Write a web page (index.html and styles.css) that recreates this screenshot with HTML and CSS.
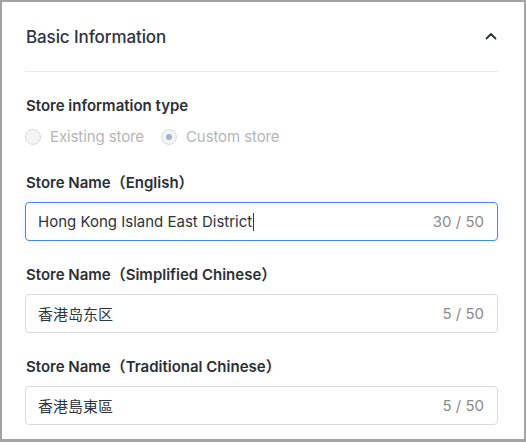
FILE: index.html
```html
<!DOCTYPE html>
<html lang="en">
<head>
<meta charset="utf-8">
<link rel="stylesheet" href="styles.css">
</head>
<body>
<div class="frame">
  <section class="card">
    <header class="card-head">
      <h2 class="title">Basic Information</h2>
      <svg class="chev" width="12" height="8" viewBox="0 0 12 8"><path d="M1.5 6.5 L6 2 L10.5 6.5" fill="none" stroke="#2d3343" stroke-width="1.8" stroke-linecap="round" stroke-linejoin="round"/></svg>
    </header>
    <div class="divider"></div>
    <div class="field first">
      <div class="label">Store information type</div>
      <div class="radios">
        <span class="radio"><span class="circle"></span><span class="rtext">Existing store</span></span>
        <span class="radio"><span class="circle checked"></span><span class="rtext">Custom store</span></span>
      </div>
    </div>
    <div class="field">
      <div class="label">Store Name（English）</div>
      <div class="input focused"><span class="value">Hong Kong Island East District<span class="caret"></span></span><span class="count">30 / 50</span></div>
    </div>
    <div class="field">
      <div class="label">Store Name（Simplified Chinese）</div>
      <div class="input"><span class="value cjk">香港岛东区</span><span class="count">5 / 50</span></div>
    </div>
    <div class="field">
      <div class="label">Store Name（Traditional Chinese）</div>
      <div class="input"><span class="value cjk-tc">香港島東區</span><span class="count">5 / 50</span></div>
    </div>
  </section>
</div>
</body>
</html>
```
FILE: styles.css
```css
html, body { margin: 0; padding: 0; }
body {
  width: 526px;
  height: 442px;
  overflow: hidden;
  background: #a3a3a3;
  font-family: Inter, "Noto Sans CJK SC", sans-serif;
}
.frame {
  box-sizing: border-box;
  width: 526px;
  height: 442px;
  border-style: solid;
  border-color: #a3a3a3;
  border-width: 2px 2px 3px 2px;
  background: #fff;
  overflow: hidden;
}
.card {
  padding: 0 26px 0 23px;
}
.card-head {
  display: flex;
  align-items: center;
  justify-content: space-between;
  padding-top: 23px;
  height: 24px;
  padding-bottom: 22px;
}
.title {
  margin: 0 0 0 1px;
  font-size: 17px;
  line-height: 24px;
  font-weight: 500;
  color: #2d3343;
  letter-spacing: -0.1px;
}
.chev { margin-right: 1px; margin-top: -2px; }
.divider { height: 1px; background: #e8e8e8; }
.field { margin-top: 24px; }
.field.first { margin-top: 24px; }
.field.first + .field { margin-top: 26px; }
.label {
  font-size: 15px;
  line-height: 20px;
  font-weight: 600;
  color: #2b2f38;
  padding-left: 1px;
}
.radios {
  display: flex;
  gap: 17px;
  margin-top: 11px;
  height: 20px;
  align-items: center;
}
.radio { display: flex; align-items: center; gap: 9px; }
.circle {
  box-sizing: border-box;
  width: 16px; height: 16px;
  border-radius: 50%;
  border: 1px solid #dcdcdc;
  background: #f4f4f5;
  display: flex; align-items: center; justify-content: center;
}
.circle.checked::after {
  content: "";
  width: 6px; height: 6px; border-radius: 50%;
  background: #a9b3c6;
}
.rtext { font-size: 15px; color: #b6b6b6; line-height: 20px; letter-spacing: -0.1px; }
.input {
  box-sizing: border-box;
  margin-top: 9px;
  height: 39px;
  border: 1px solid #dadada;
  border-radius: 4px;
  display: flex;
  align-items: center;
  justify-content: space-between;
  padding: 0 13px 0 12px;
  background: #fff;
}
.input.focused {
  border-color: #4a86e8;
  box-shadow: 0 0 10px rgba(74,134,232,0.12);
}
.value {
  font-size: 15px;
  color: #2e3440;
  display: flex;
  align-items: center;
}
.cjk { font-family: Inter, "Noto Sans CJK SC", sans-serif; }
.cjk-tc { font-family: Inter, "Noto Sans CJK TC", sans-serif; }
.caret {
  display: inline-block;
  width: 1px; height: 18px;
  background: #2e3440;
  margin-left: 1px;
}
.count { font-size: 15px; color: #8b8b8b; }
```
